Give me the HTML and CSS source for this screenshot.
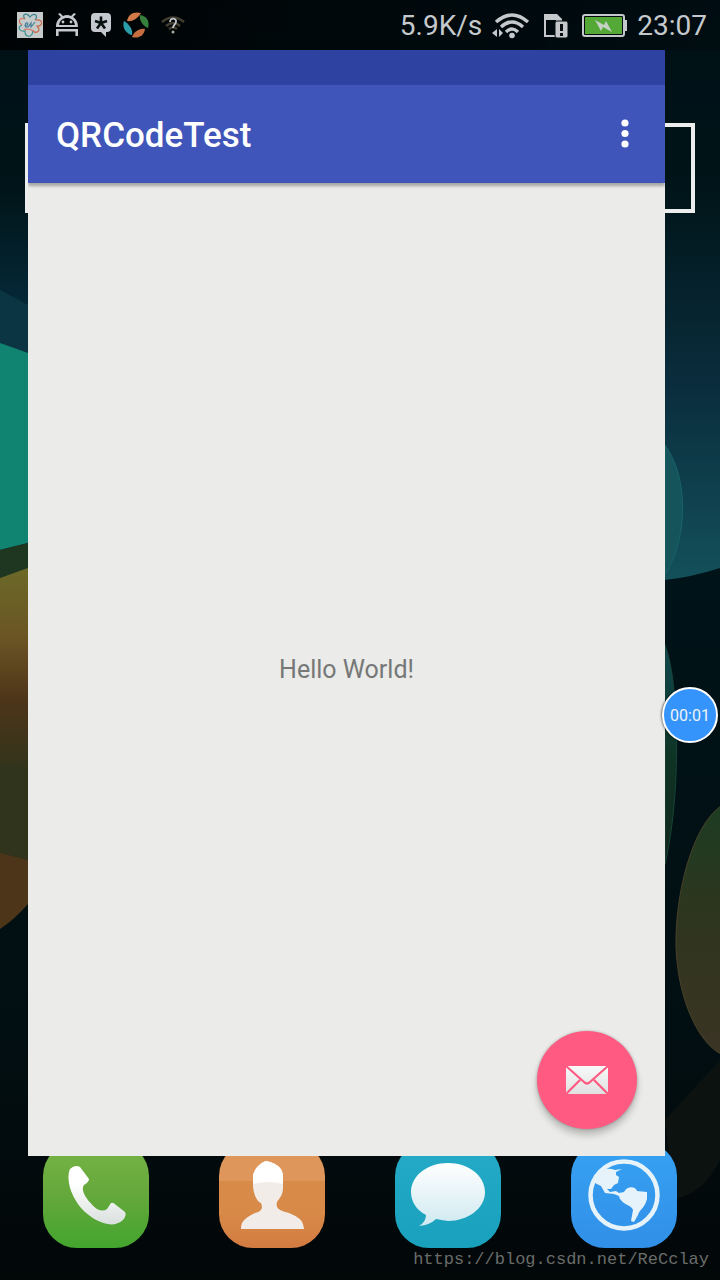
FILE: index.html
```html
<!DOCTYPE html>
<html lang="en">
<head>
<meta charset="utf-8">
<meta name="viewport" content="width=device-width, initial-scale=1">
<title>QRCodeTest</title>
<link rel="stylesheet" href="styles.css">
</head>
<body>
<div class="phone">
  <svg class="wallpaper" viewBox="0 0 720 1280" preserveAspectRatio="none" aria-hidden="true">
    <defs>
      <linearGradient id="sky" x1="0" y1="0" x2="0" y2="1">
        <stop offset="0" stop-color="#000f15"/><stop offset=".15" stop-color="#001519"/>
        <stop offset=".25" stop-color="#062b3c"/><stop offset=".45" stop-color="#001318"/>
        <stop offset=".8" stop-color="#020f12"/><stop offset="1" stop-color="#020708"/>
      </linearGradient>
      <linearGradient id="wave" x1="0" y1="0" x2="0" y2="1">
        <stop offset="0" stop-color="#001519"/><stop offset=".5" stop-color="#0a2d3d"/>
        <stop offset="1" stop-color="#13505a"/>
      </linearGradient>
      <linearGradient id="amber" x1="0" y1="0" x2="0" y2="1">
        <stop offset="0" stop-color="#6b6928"/><stop offset=".35" stop-color="#6b5424"/>
        <stop offset=".65" stop-color="#4d3519"/><stop offset="1" stop-color="#32341c"/>
      </linearGradient>
      <linearGradient id="olive" x1="0" y1="0" x2="0" y2="1">
        <stop offset="0" stop-color="#1d3c22"/><stop offset=".5" stop-color="#30351f"/>
        <stop offset="1" stop-color="#3a3424"/>
      </linearGradient>
      <linearGradient id="leaf" x1="0" y1="0" x2="0" y2="1">
        <stop offset="0" stop-color="#104850"/><stop offset=".5" stop-color="#0e3425"/>
        <stop offset="1" stop-color="#10261c"/>
      </linearGradient>
    </defs>
    <path fill="url(#sky)" d="M0 0H720V1280H0z"/>
    <path fill="#0c3543" d="M0 290L28 305V355L0 343z"/>
    <path fill="#108471" d="M0 343L28 353V543L0 550z"/>
    <path fill="#1f3620" d="M0 550L28 543V570L0 578z"/>
    <path fill="url(#amber)" d="M0 578L28 568V770H0z"/>
    <path fill="#31341d" d="M0 765L28 768V862H0z"/>
    <path fill="#4c3519" d="M0 853L28 860V904Q14 920 0 929z"/>
    <path fill="url(#wave)" d="M665 190H720V568Q692 577 665 580z"/>
    <path fill="#16545b" stroke="#18626a" d="M665 445C688 477 689 535 665 575z"/>
    <path fill="url(#leaf)" stroke="#174336" d="M665 645C680 684 681 797 665 864z"/>
    <path fill="url(#olive)" stroke="#4a4127" d="M721 806C692 826 675 894 676 947C678 1001 699 1043 721 1054z"/>
    <path fill="#0c1210" d="M665 1120L720 1060V1160Q704 1193 675 1199z"/>
  </svg>
  <div class="widget-frame"></div>

  <header class="status">
    <div class="status-group notices">
      <svg width="26" height="26" viewBox="0 0 26 26" aria-hidden="true">
        <path fill="#c5cbca" d="M0 0h26v26H0z"/>
        <g fill="none" stroke-width="1.2">
          <path stroke="#347f91" d="M8 7C4 2 10 0 13 5C17 0 22 3 18 8"/>
          <path stroke="#c66a48" d="M18 8C26 7 27 14 20 14C25 19 19 22 16 19"/>
          <path stroke="#3b9294" d="M16 19C15 26 8 26 8 19C2 20 0 15 5 13"/>
          <path stroke="#d07862" d="M5 13C0 9 3 5 8 7M7 18C9 16 16 18 18 20"/>
          <path stroke="#477f9e" d="M8 14C11 14 12 10 9 11C7 14 9 17 12 14L14 11V15L18 10"/>
        </g>
      </svg>
      <svg width="24" height="26" viewBox="0 0 24 26" aria-hidden="true">
        <path fill="#c5c8ce" fill-rule="evenodd" d="M1 15C1 10 3 7 6 5L3 2L5 1L8 4Q12 2 16 4L19 1L21 2L18 5C21 7 23 10 23 15zM4 13H20C19 8 16 6 12 6S5 8 4 13z"/>
        <circle cx="8" cy="10" r="1.400" fill="#c5c8ce"/><circle cx="16" cy="10" r="1.400" fill="#c5c8ce"/>
        <path fill="none" stroke="#c5c8ce" stroke-width="2.600" d="M2.300 24V18.300H21.700V24"/>
      </svg>
      <svg width="20" height="26" viewBox="0 0 20 26" aria-hidden="true">
        <path fill="#c5c8ce" d="M4 1H16Q20 1 20 5V16Q20 20 16 20H15V25L10 20H4Q0 20 0 16V5Q0 1 4 1z"/>
        <path stroke="#07100f" stroke-width="2.600" d="M10 4.500V11M10 11L4 9M10 11L16 9M10 11L6 16.500M10 11L14 16.500"/>
      </svg>
      <svg width="26" height="26" viewBox="0 0 26 26" aria-hidden="true">
        <path fill="#d17949" d="M4 9C5 2 11-1 18 1C15 6 10 10 4 9z"/>
        <path fill="#377f3c" d="M17 3C24 4 27 10 25 16C20 14 16 9 17 3z"/>
        <path fill="#c66e3f" d="M22 17C21 24 15 27 9 25C11 20 16 16 22 17z"/>
        <path fill="#2b9eaa" d="M1 9C6 12 10 17 9 23C2 21-1 15 1 9z"/>
      </svg>
      <svg width="24" height="26" viewBox="0 0 24 26" aria-hidden="true">
        <g fill="none" stroke="#423e30" stroke-width="2.600"><path d="M1 10Q12 1 23 10M5 14Q12 8 19 14M8 17Q12 14 16 17"/></g>
        <path fill="none" stroke="#c5c8ce" stroke-width="1.800" d="M9 10C9 5 16 6 15 10C15 12 12 13 12 16"/>
        <circle cx="12" cy="20" r="1.500" fill="#aaa99d"/>
      </svg>
    </div>
    <div class="status-group system">
      <span>5.9K/s</span>
      <svg width="38" height="26" viewBox="0 0 38 26" aria-hidden="true">
        <g fill="none" stroke="#c5c9cc" stroke-width="3.400"><path d="M4 9Q20-5 36 9M9 14Q20 4 31 14M14 19Q20 13 26 19"/></g>
        <circle cx="20" cy="22.500" r="2.800" fill="#c5c9cc"/>
        <path fill="#c5c9cc" d="M5 16V24L0 20zM7 16V24L11 20z"/>
      </svg>
      <svg class="storage" width="24" height="26" viewBox="0 0 24 26" aria-hidden="true">
        <path fill="#c5c9cc" fill-rule="evenodd" d="M0 1H13L18 6V24H0zM2 7V22H12V7z"/>
        <rect x="11" y="8" width="13" height="17" rx="2" fill="#c5c9cc" stroke="#07100f"/>
        <path stroke="#07100f" stroke-width="3" d="M17.500 11V18M17.500 20V23"/>
      </svg>
      <svg width="45" height="26" viewBox="0 0 45 26" aria-hidden="true">
        <rect x="1" y="2" width="41" height="21" rx="2" fill="none" stroke="#c5c9cc" stroke-width="2"/>
        <path fill="#c5c9cc" d="M43 7h2v11h-2z"/><path fill="#54a936" d="M3 4h37v17H3z"/>
        <path fill="#c5d1c5" d="M13 7L22 12L24 8L30 19L21 14L19 18z"/>
      </svg>
      <time>23:07</time>
    </div>
  </header>

  <main class="app">
    <div class="app-status"></div>
    <div class="toolbar">
      <h1 class="title">QRCodeTest</h1>
      <button class="overflow" type="button" aria-label="More options">
        <svg width="8" height="30" viewBox="0 0 8 30" fill="#fff" aria-hidden="true"><circle cx="4" cy="4" r="3.600"/><circle cx="4" cy="14.500" r="3.600"/><circle cx="4" cy="25" r="3.600"/></svg>
      </button>
    </div>
    <div class="content"><p class="hello">Hello World!</p></div>
    <button class="fab" type="button" aria-label="Compose mail">
      <svg width="44" height="30" viewBox="0 0 44 30" aria-hidden="true">
        <defs><linearGradient id="mail" x1="0" y1="0" x2="0" y2="1"><stop stop-color="#f8faf9"/><stop offset="1" stop-color="#dfe0df"/></linearGradient></defs>
        <rect x="1" y="1" width="42" height="28" rx="1" fill="url(#mail)"/>
        <path fill="none" stroke="#ff5a82" stroke-width="2.200" d="M1 1L19 17Q22 20 25 17L43 1M1 29L15 15M43 29L29 15"/>
      </svg>
    </button>
  </main>

  <nav class="dock" aria-label="Favourites">
    <button class="launcher phone-app" type="button" aria-label="Phone">
      <svg viewBox="0 0 106 106" aria-hidden="true">
        <defs><linearGradient id="white" x1="0" y1="0" x2="0" y2="1"><stop offset=".3" stop-color="#fff"/><stop offset="1" stop-color="#d9e0dd"/></linearGradient></defs>
        <path fill="url(#white)" d="M27 27Q32 22 37 25L46 37Q46 40 41 43C37 48 44 59 54 67Q60 70 64 67L68 61Q70 60 73 63L82 70Q84 73 80 78C69 88 52 79 42 70C30 59 22 39 27 27z"/>
      </svg>
    </button>
    <button class="launcher contacts-app" type="button" aria-label="Contacts">
      <svg viewBox="0 0 106 106" aria-hidden="true">
        <path fill="#f1ece7" d="M47 19C53 20 64 24 64 34V46C64 53 60 57 58 60C56 67 62 69 70 71C81 76 84 78 85 87H22C22 79 26 76 36 71C43 69 44 66 42 61C37 59 34 50 34 43V34C35 26 43 20 47 19z"/>
        <path fill="#fff" d="M47 19C53 20 64 24 64 34V42Q49 38 34 42V34C35 26 43 20 47 19z"/>
      </svg>
    </button>
    <button class="launcher messages-app" type="button" aria-label="Messages">
      <svg viewBox="0 0 106 106" aria-hidden="true">
        <defs><linearGradient id="bubble" x1="0" y1="0" x2="0" y2="1"><stop stop-color="#fff"/><stop offset="1" stop-color="#cfe9f1"/></linearGradient></defs>
        <path fill="url(#bubble)" d="M53 21C74 21 90 34 90 50C90 67 72 79 53 79Q46 78 41 77Q35 83 24 84Q31 80 31 73C21 68 16 59 16 50C16 34 32 21 53 21z"/>
      </svg>
    </button>
    <button class="launcher browser-app" type="button" aria-label="Browser">
      <svg viewBox="0 0 106 106" aria-hidden="true">
        <circle cx="53" cy="53" r="33.500" fill="none" stroke="#e7f3fa" stroke-width="4.500"/>
        <path fill="#e7f3fa" d="M24 35C29 27 37 25 44 28L51 27L45 30V33L48 35L47 41L43 43L40 47H36L39 50L45 49L48 51L53 50C57 43 65 45 66 49L76 50V57C74 66 68 68 67 73L63 80L60 79L62 68C61 63 49 62 48 54L43 52L34 51L30 44L24 41z"/>
      </svg>
    </button>
  </nav>
  <a class="credit" href="https://blog.csdn.net/ReCclay">https://blog.csdn.net/ReCclay</a>
  <button class="recorder" type="button" aria-label="Recording time 00:01">00:01</button>
</div>
</body>
</html>
```
FILE: styles.css
```css
* {
  box-sizing: border-box;
}

body {
  margin: 0;
  background: #000f15;
  font-family: Roboto, "Noto Sans", sans-serif;
}

button {
  padding: 0;
  border: 0;
  font-family: inherit;
  cursor: pointer;
}

svg {
  display: block;
}

.phone {
  position: relative;
  isolation: isolate;
  display: flex;
  flex-direction: column;
  min-height: 100vh;
  overflow: hidden;
}

.wallpaper {
  position: absolute;
  inset: 0;
  z-index: -2;
  width: 100%;
  height: 100%;
}

.widget-frame {
  position: absolute;
  z-index: -1;
  top: 123px;
  left: 25px;
  right: 25px;
  height: 90px;
  border: 4px solid #eceeee;
}

.status {
  display: flex;
  align-items: center;
  justify-content: space-between;
  height: 50px;
  padding: 0 13px 0 17px;
  background: linear-gradient(90deg, #000000cc, #00000033);
  color: #c5c9cc;
  font-size: 28px;
  line-height: 32px;
}

.status-group {
  display: flex;
  align-items: center;
}

.notices {
  gap: 12px;
}

.system {
  gap: 10px;
  padding-top: 2px;
}

.storage {
  margin: 0 4px;
}

.app {
  position: relative;
  z-index: 1;
  display: flex;
  flex: 1;
  flex-direction: column;
  margin: 0 55px 0 28px;
  background: #ebebe9;
}

.app-status {
  height: 35px;
  background: #2e43a1;
}

.toolbar {
  display: flex;
  align-items: center;
  justify-content: space-between;
  height: 98px;
  padding: 0 28px;
  background: #3f55b9;
  box-shadow: 0 3px 3px #0000004d;
  clip-path: inset(0 0 -8px 0);
}

.title {
  margin: 0;
  padding-top: 4px;
  color: #fff;
  font-size: 35px;
  font-weight: 500;
  line-height: 42px;
}

.overflow {
  display: grid;
  place-items: center;
  width: 24px;
  height: 48px;
  background: transparent;
}

.content {
  display: grid;
  flex: 1;
  place-items: center;
}

.hello {
  margin: 0;
  color: #757877;
  font-size: 25px;
  line-height: 30px;
}

.fab {
  position: absolute;
  right: 28px;
  bottom: 27px;
  display: grid;
  place-items: center;
  width: 100px;
  height: 98px;
  border-radius: 50%;
  background: #ff5a82;
  box-shadow: 0 6px 7px #00000038, 0 0 3px #00000040;
}

.dock {
  display: flex;
  justify-content: space-between;
  margin-top: -14px;
  padding: 0 43px;
}

.launcher {
  width: 106px;
  height: 106px;
  border-radius: 34px;
}

.phone-app {
  background: linear-gradient(#78b447, #65a83b 50%, #43a52e);
}

.contacts-app {
  background: linear-gradient(#df965b 37%, #d88b48 37%, #d88b48 65%, #d37b42);
}

.messages-app {
  background: linear-gradient(#25abc8, #18a0bc);
}

.browser-app {
  background: linear-gradient(#37a2f2, #318fe8);
}

.credit {
  align-self: flex-end;
  padding: 2px 11px 10px 0;
  color: #6a6c6a;
  font-family: "Liberation Mono", monospace;
  font-size: 17px;
  line-height: 20px;
  text-decoration: none;
}

.recorder {
  position: absolute;
  z-index: 2;
  top: 687px;
  right: 2px;
  width: 56px;
  height: 56px;
  border: 2px solid #fff;
  border-radius: 50%;
  background: #3494fc;
  box-shadow: -1px 0 2px #00000080;
  color: #edf3f6;
  font-size: 16px;
}
```
